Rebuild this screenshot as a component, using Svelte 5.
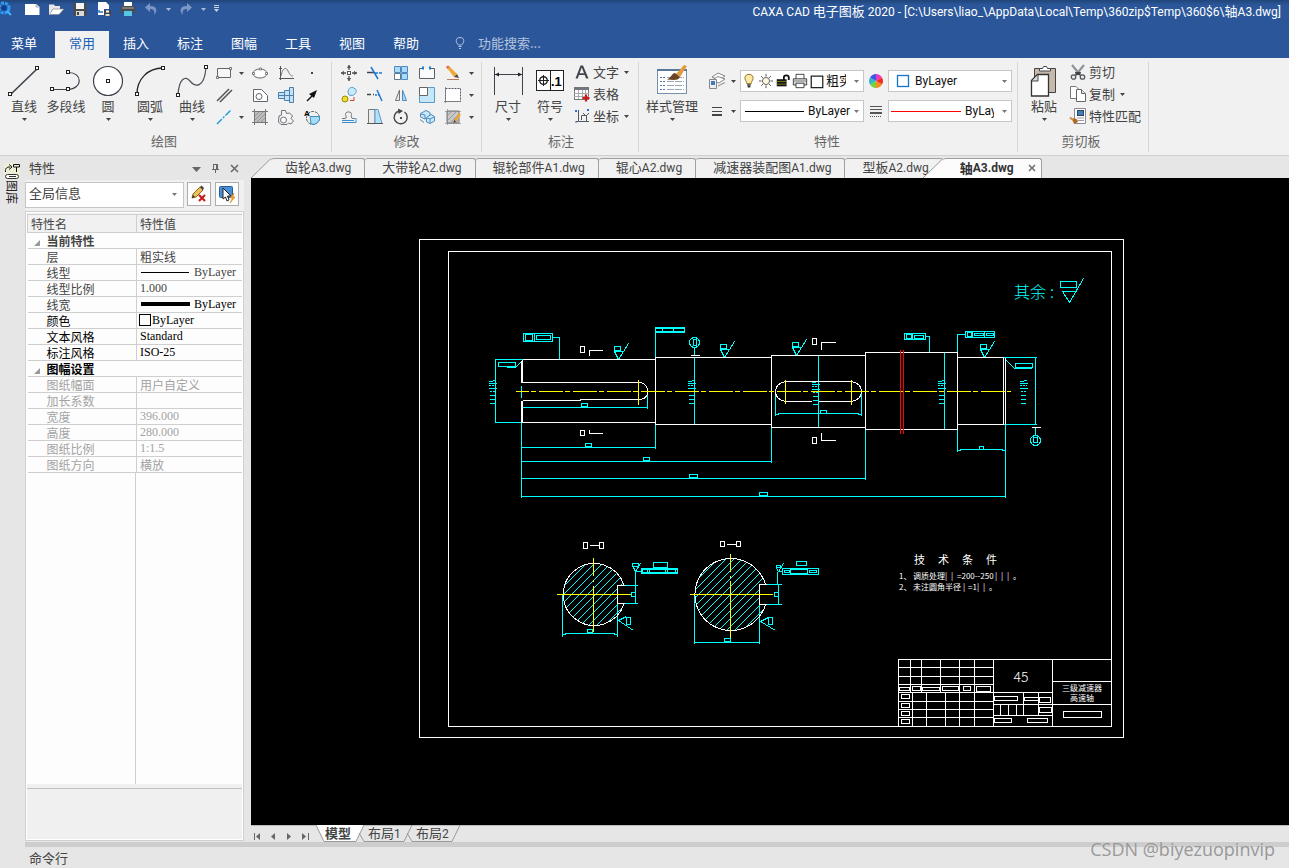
<script>
  const sq = (x, y) => `<rect x="${x}" y="${y}" width="3" height="3" fill="#fff" stroke="#222" stroke-width="1"/>`;

  const big = {
    line: `<path d="M2 30 30 3" stroke="#3c434d" stroke-width="1.6" fill="none"/>${sq(0.5, 27.5)}${sq(27.5, 1.5)}`,
    poly: `<path d="M2 24.500H18M18 7.500C33 7 33 24 18 24.500" stroke="#3c434d" stroke-width="1.2" fill="none"/>${sq(0.5, 22.5)}${sq(16.5, 22.5)}${sq(16.5, 5.5)}`,
    circle: `<circle cx="16" cy="16" r="14.500" fill="#fff" stroke="#3c434d" stroke-width="1.200"/>${sq(14.5, 14.5)}`,
    arc: `<path d="M3 29C3 14 14 3 29 3" stroke="#222" stroke-width="1.3" fill="none"/>${sq(1.5, 27.5)}${sq(27.5, 1.5)}`,
    curve: `<path d="M2 30C3 14 9 10 14 16S28 24 30 3" stroke="#4c525a" stroke-width="1.2" fill="none"/>${sq(0.5, 28.5)}${sq(28.5, 0.5)}`,
    dim: `<path d="M2.500 2V30M30.500 2V30M3 9.500H30" stroke="#3c434d" fill="none"/><path d="M3 9.500 7 7.500V11.500ZM30 9.500 26 7.500V11.500Z" fill="#222"/>`,
    symbol: `<rect x="2.500" y="5.500" width="27" height="20" fill="#fff" stroke="#222"/><path d="M16.500 5V26M4 15.500H15M9.500 10V21" stroke="#222"/><circle cx="9.500" cy="15.500" r="3.800" fill="none" stroke="#222" stroke-width="1.400"/><text x="17" y="21" font-family="Liberation Sans, sans-serif" font-size="13" font-weight="700">.1</text>`,
    style: `<rect x="1.500" y="4.500" width="29" height="24" fill="#fff" stroke="#7890a8"/><rect x="1" y="4" width="30" height="2" fill="#56799c"/><path d="M4 12.500H9M4 16.500H9M4 20.500H9M4 24.500H9" stroke="#4b7bb0" stroke-dasharray="2 1"/><path d="M11 12.500H28M11 16.500H28M11 20.500H28M11 24.500H28" stroke="#9aa7b5" stroke-dasharray="7 1"/><path d="M20 9 28 0 31 1 24 12Z" fill="#e29a3e"/><path d="M19 8 24 12C22 16 17 15 11 14.500 15 13 16 8 19 8Z" fill="#6a4422"/>`,
    paste: `<path d="M6.500 3.500H27.500V27.500H6.500Z" fill="#c6b9ab" stroke="#444"/><path d="M11.500 6V3.500H14.500L15.500 1.500H18.500L19.500 3.500H22.500V6Z" fill="#fff" stroke="#444"/><path d="M3.500 15.500 9.500 9.500H20.500V31H3.500Z" fill="#fff" stroke="#333" stroke-width="1.300"/><path d="M4 16H10V10" fill="#d9d9d9" stroke="#444"/>`
  };

  const small = {
    rect: `<path d="M2.500 4.500H15.500V13.500H2.500Z" fill="#f6f6f6" stroke="#62676e"/><path d="M1.500 12.500h2v2h-2ZM14.500 3.500h2v2h-2Z" fill="#fff" stroke="#555" stroke-width=".8"/>`,
    ellipse: `<ellipse cx="9" cy="9.500" rx="7" ry="4.500" fill="#fff" stroke="#62676e"/><path d="M8.500 4h2v2h-2ZM1.500 8.500h2v2h-2ZM14.500 8.500h2v2h-2Z" fill="#fff" stroke="#555" stroke-width=".7"/>`,
    func: `<path d="M3.500 2V16M2 14.500H17M2 4.500H5" stroke="#52575e" fill="none"/><path d="M4 12C6 3 9 3 11 7S14 12 16 12" stroke="#777" fill="none"/>`,
    point: `<rect x="8" y="8" width="2" height="2" fill="#444"/>`,
    parallel: `<path d="M2 15 14 3M5 16 17 4" stroke="#555" stroke-width="1.500"/>`,
    hole: `<path d="M2.500 3.500H10.500L16.500 9.500V15.500H2.500Z" fill="#fff" stroke="#62676e"/><circle cx="8" cy="10.500" r="3" fill="#fff" stroke="#62676e"/>`,
    shaft: `<path d="M1.500 6.500H7.500V12.500H1.500ZM7.500 4.500H12.500V14.500H7.500ZM12.500 1.500H16.500V16.500H12.500Z" fill="#c5e3f7" stroke="#4d80ae"/><path d="M1 9.500H17" stroke="#4d80ae"/>`,
    arrow: `<path d="M4 15 10 9" stroke="#111" stroke-width="1.500"/><path d="M14 4 6 8 11 12Z" fill="#111"/>`,
    center: `<path d="M2 16 16 2" stroke="#199be0" stroke-width="1.400" stroke-dasharray="7 1.500 2 1.500"/>`,
    hatch: `<path d="M3.500 3.500H14.500V14.500H3.500Z" fill="#bdbdbd" stroke="#666"/><path d="M1 3.500H17M1 14.500H17M3.500 1V17M14.500 1V17" stroke="#777"/><path d="M4 8 8 4M4 12 12 4M6 14 14 6M10 14 14 10" stroke="#888" stroke-width=".8"/>`,
    gear: `<path d="M4.500 2.500H8.500L9.500 5.500 12.500 5 15.500 8 14 10.500 16.500 13 14 16 11.500 15 10 16.500H4L1.500 14 2 8 4.500 7Z" fill="#f4f4f4" stroke="#6c7178"/><circle cx="6.500" cy="12" r="3" fill="#fff" stroke="#6c7178"/>`,
    local: `<circle cx="10" cy="10" r="6.500" fill="none" stroke="#555" stroke-dasharray="3 1"/><path d="M7 8.500H16.500A6.500 6.500 0 0 1 8 16Z" fill="#a8dcf5" stroke="#3a8fc0"/><text x="1" y="8" font-family="Liberation Sans, sans-serif" font-size="8" font-weight="700">A</text>`,
    move: `<path d="M9 1V6M9 12V17M1 9H6M12 9H17" stroke="#555" stroke-width="1.300"/><path d="M9 1 6.800 4H11.200ZM9 17 6.800 14H11.200ZM1 9 4 6.800V11.200ZM17 9 14 6.800V11.200Z" fill="#555"/><rect x="7.500" y="7.500" width="3" height="3" fill="#fff" stroke="#555"/>`,
    trim: `<path d="M1 8.500H8" stroke="#444" stroke-width="1.500"/><path d="M9 9H17" stroke="#1d78d2" stroke-width="1.500" stroke-dasharray="3 1"/><path d="M5 3 12 15" stroke="#1d78d2" stroke-width="1.500"/>`,
    array: `<path d="M2.500 2.500H8.500V8.500H2.500ZM9.500 2.500H15.500V8.500H9.500ZM9.500 9.500H15.500V15.500H9.500Z" fill="#a9ddf7" stroke="#4c8abf"/><path d="M2.500 9.500H8.500V15.500H2.500Z" fill="#fff" stroke="#62778a"/>`,
    breaks: `<path d="M1.500 4.500H4.500M12.500 4.500H16.500V14.500H1.500V4.500" fill="#fbfbfb" stroke="#5a5f66"/><rect x="4" y="2.500" width="2" height="3" fill="#1780d6"/><rect x="11" y="2.500" width="2" height="3" fill="#1780d6"/>`,
    erase: `<path d="M3 4 5 2 13 10 10 13Z" fill="#f0a835"/><path d="M10 13 13 10 15 14Z" fill="#5a4634"/><path d="M3 15.500H15" stroke="#bd7a5a"/><path d="M2 3 4 1.500 5.500 3 3.500 5Z" fill="#df6a4e"/>`,
    copymove: `<circle cx="5" cy="13" r="3" fill="#f2de21" stroke="#9a8c10"/><path d="M8 6C8 3 10 1 13 1.500L16 3.500C17 6 15 9 12 9.500L9 9Z" fill="#c9eafc" stroke="#5f9fd0"/><path d="M10 14.500H14V11" stroke="#c44" fill="none"/>`,
    extend: `<path d="M1 8.500H5M7 8.500H8" stroke="#444" stroke-width="1.500"/><path d="M9 9H14" stroke="#1d78d2" stroke-width="1.500" stroke-dasharray="2 1"/><path d="M11 4 16 15" stroke="#1d78d2" stroke-width="1.500"/>`,
    mirror: `<path d="M7.500 4V14.500H3.500Z" fill="#e8e8e8" stroke="#777"/><path d="M10.500 4V14.500H14.500Z" fill="#a6dcf6" stroke="#4c8abf"/>`,
    scale: `<path d="M1.500 1.500H16.500V16.500H1.500Z" fill="#c4e8fa" stroke="#5c9bc8"/><path d="M1.500 1.500H9.500V9.500H1.500Z" fill="#fff" stroke="#666"/>`,
    stretch: `<path d="M1.500 2.500H16.500V15.500H1.500Z" fill="#fff" stroke="#556" stroke-dasharray="2 1"/><path d="M1.500 1V17M0 15.500H17" stroke="#777" stroke-width=".8"/>`,
    offset: `<path d="M2 10.500H5C7 10.500 6 8 5.500 6.500 5 3 12 3 11.500 6.500 11 8 11 10.500 13 10.500H15" fill="none" stroke="#777"/><path d="M2 14.500H16V10" fill="none" stroke="#3d8ccb"/><path d="M2 12.500H14" stroke="#3d8ccb"/>`,
    taper: `<path d="M2.500 1.500H9V15.500H2.500Z" fill="#ececec" stroke="#777"/><path d="M9 1.500H12L16 15.500H9Z" fill="#b5e1f8" stroke="#5c9bc8"/><path d="M1 15.500H17" stroke="#555"/>`,
    rotate: `<path d="M7 3A6.500 6.500 0 1 0 12.500 4" fill="none" stroke="#444" stroke-width="1.400"/><path d="M6 .5 11 3 6.500 6Z" fill="#444"/><rect x="8" y="9" width="2" height="2" fill="#444"/>`,
    explode: `<path d="M2.500 5.500 8 2.500 12 4.500V9L7 11 2.500 9Z" fill="#c9eafc" stroke="#4c8abf"/><path d="M8.500 9.500 13 6.500 16.500 8.500V13L12 15.500 8.500 14Z" fill="#c9eafc" stroke="#4c8abf"/><path d="M2 11.500 6 14.500" stroke="#4c8abf"/><path d="M9 10 12 11V15M12 11 16 9M3 6 7 7V11" stroke="#4c8abf" fill="none"/>`,
    hatchedit: `<path d="M3 3H15V15H3Z" fill="#c9c9c9" stroke="#777"/><path d="M3 8 8 3M3 13 13 3M6 15 15 6M11 15 15 11" stroke="#999"/><path d="M1 3.500H17M1 15.500H17M3.500 1V17" stroke="#888" stroke-width=".7"/><path d="M10 12 15 5 17 6.500 12 13.500Z" fill="#efa432"/><path d="M10 12 12 13.500 9.500 15Z" fill="#333"/>`,
    text: `<path d="M2.500 15.500 7.500 2.500H10L15.500 15.500H13L11.700 12H6L4.800 15.500ZM6.600 10.200H11L8.800 4.500Z" fill="#41464e"/>`,
    table: `<rect x="1.500" y="2.500" width="14" height="12" fill="#fff" stroke="#777"/><rect x="1" y="2" width="15" height="3" fill="#73777c"/><path d="M1 8.500H16M1 11.500H16M5.500 5V14M9.500 5V14M12.500 5V14" stroke="#aaa"/><path d="M13 9.500V16.500M9.500 13H16.500" stroke="#d01818" stroke-width="2.200"/>`,
    coord: `<path d="M5.500 4V14.500H16M8.500 13V8.500H12M10 6 13 9 16 6M13.500 9V14" fill="none" stroke="#53585f"/><path d="M5.500 3v2M3 14.500h2" stroke="#53585f"/><path d="M2 3 4 5M4 3 2 5M14 2 16 4M16 2 14 4M2 15h2" stroke="#2a6fd0"/>`,
    layers: `<path d="M4 5 10 1 17 4 11 8Z" fill="#fff" stroke="#888"/><path d="M4 8 10 4.500 17 7 11 11Z" fill="#fff" stroke="#888"/><path d="M1.500 7.500H8.500V16.500H1.500Z" fill="#eee" stroke="#888"/><rect x="3" y="9" width="4" height="4" fill="#3d7dbd"/><path d="M10 14 17 10.500" stroke="#888"/>`,
    lines: `<path d="M4 5.500H14" stroke="#444"/><path d="M4 9.500H14" stroke="#444"/><path d="M4 13H14" stroke="#444" stroke-width="2"/>`,
    wheel: `<g transform="translate(9 9)"><path d="M0 0V-7A7 7 0 0 1 6 -3.500Z" fill="#e83ab8"/><path d="M0 0 6 -3.500A7 7 0 0 1 6 3.500Z" fill="#ee2e24"/><path d="M0 0 6 3.500A7 7 0 0 1 0 7Z" fill="#f58a1f"/><path d="M0 0V7A7 7 0 0 1 -6 3.500Z" fill="#7ccf35"/><path d="M0 0 -6 3.500A7 7 0 0 1 -6 -3.500Z" fill="#2fb6c9"/><path d="M0 0 -6 -3.500A7 7 0 0 1 0 -7Z" fill="#4355e8"/></g>`,
    widths: `<path d="M3 4.500H15M3 7.500H15" stroke="#555"/><path d="M3 11H15" stroke="#555" stroke-width="2"/><path d="M3 14.500H15" stroke="#555" stroke-dasharray="1 1"/>`,
    cut: `<path d="M3 2 12 13M15 2 6 13" stroke="#8f9499" stroke-width="2.200"/><circle cx="4.500" cy="14" r="2.200" fill="none" stroke="#55595e" stroke-width="1.300"/><circle cx="13.500" cy="14" r="2.200" fill="none" stroke="#55595e" stroke-width="1.300"/><path d="M6 9H12L11 12H7Z" fill="#444"/>`,
    copy: `<path d="M1.500 1.500H7L9.500 4V13.500H1.500Z" fill="#fff" stroke="#777"/><path d="M7.500 4.500H12.500L16.500 8.500V16.500H7.500Z" fill="#fff" stroke="#666"/><path d="M12.500 4.500V8.500H16.500" fill="#ddd" stroke="#666"/>`,
    match: `<path d="M5.500 1.500H16.500V16.500H5.500Z" fill="#fff" stroke="#889"/><rect x="8.500" y="3.500" width="6" height="5" fill="#3f7fc0" stroke="#345"/><path d="M8 11H15M9 13.500H15" stroke="#99a"/><path d="M3 12C5 10 9 12 9 15L5 17Z" fill="#b3681e"/><path d="M1 10.500 4 13" stroke="#c98f4a" stroke-width="2"/>`,
    bulb: `<path d="M9 1.500C5.500 1.500 4 4 4.500 6.500 5 9 6.500 9.500 6.500 12H11.500C11.500 9.500 13 9 13.500 6.500 14 4 12.500 1.500 9 1.500Z" fill="#fde9a2" stroke="#8a6a1c"/><path d="M7 13.500H11M7.500 15.500H10.500" stroke="#333" stroke-width="1.600"/>`,
    sun: `<circle cx="9" cy="9" r="4" fill="#fff8e0" stroke="#555"/><path d="M9 1V4M9 14V17M1 9H4M14 9H17M3.500 3.500 5.500 5.500M12.500 12.500 14.500 14.500M14.500 3.500 12.500 5.500M3.500 14.500 5.500 12.500" stroke="#444"/>`,
    lock: `<path d="M10 9V5C10 2 15.500 2 15.500 5V8" fill="none" stroke="#111" stroke-width="2"/><path d="M2 7H13V15H2Z" fill="#111"/><path d="M2 9.500H13M2 12.500H13" stroke="#8a8a20"/>`,
    printer: `<path d="M4.500 7V1.500H13.500V7" fill="#fff" stroke="#333"/><path d="M1.500 6.500H16.500V13.500H1.500Z" fill="#d9dde0" stroke="#333"/><path d="M4.500 11.500H13.500V16.500H4.500Z" fill="#fff" stroke="#333"/><path d="M1.500 9H16" stroke="#777"/>`,
    white: `<rect x="2.500" y="3.500" width="13" height="13" fill="#fff" stroke="#111" stroke-width="1.300"/>`,
    blue: `<rect x="3.500" y="3.500" width="11" height="11" fill="#fff" stroke="#1474cc" stroke-width="1.300"/>`
  };

  const qat = [
    ['新建', `<path d="M1 3H12L15.500 6V14H1Z" fill="#fff"/><path d="M12 3V6H15.500" fill="#ddd" stroke="#999" stroke-width=".7"/>`],
    ['打开', `<path d="M1 3.500H6L7 5H12V8H5L2 14H1Z" fill="#e8e8e8"/><path d="M5 8H16L11 13.500H1.500Z" fill="#fff" stroke="#777" stroke-width=".6"/>`],
    ['保存', `<path d="M1.500 2H14.500V15H3L1.500 13.500Z" fill="#4a4a4a"/><rect x="4" y="2" width="8" height="6" fill="#f5f5f5"/><rect x="4" y="10" width="8" height="5" fill="#d9d9d9"/><rect x="5" y="11" width="2" height="3" fill="#444"/>`],
    ['另存为', `<path d="M2 1H10L13 4V8H8V14H2Z" fill="#fff"/><path d="M3 9V11H7" stroke="#2477c9" stroke-width="1.500" fill="none"/><rect x="8" y="9" width="7" height="6" fill="#444"/><rect x="10" y="9.500" width="3" height="2" fill="#fff"/><rect x="9.500" y="13" width="4" height="2" fill="#ddd"/>`],
    ['打印', `<path d="M4 1H12V5H4Z" fill="#fff"/><path d="M1 5H15V12H1Z" fill="#4b4b4b"/><path d="M2 7H14" stroke="#aaa"/><path d="M4 10H12V15H4Z" fill="#55c8e8"/>`]
  ];

  const menus = ['常用', '插入', '标注', '图幅', '工具', '视图', '帮助'];
  const drawBig = [['line', '直线', 1], ['poly', '多段线', 0], ['circle', '圆', 1], ['arc', '圆弧', 1], ['curve', '曲线', 1]];
  const drawSmall = ['rect', 'v', 'ellipse', 'func', 'point', 'parallel', '', 'hole', 'shaft', 'arrow', 'center', 'v', 'hatch', 'gear', 'local'];
  const editSmall = ['move', 'trim', 'array', 'breaks', 'erase', 'v', 'copymove', 'extend', 'mirror', 'scale', 'stretch', 'v', 'offset', 'taper', 'rotate', 'explode', 'hatchedit', 'v'];
  const docs = ['齿轮A3.dwg', '大带轮A2.dwg', '辊轮部件A1.dwg', '辊心A2.dwg', '减速器装配图A1.dwg', '型板A2.dwg'];
  const propsNow = [
    ['层', '粗实线', ''], ['线型', 'ByLayer', 'thin'], ['线型比例', '1.000', ''], ['线宽', 'ByLayer', 'thick'],
    ['颜色', 'ByLayer', 'box'], ['文本风格', 'Standard', ''], ['标注风格', 'ISO-25', '']
  ];
  const propsSheet = [['图纸幅面', '用户自定义'], ['加长系数', ''], ['宽度', '396.000'], ['高度', '280.000'], ['图纸比例', '1:1.5'], ['图纸方向', '横放']];

  const parts = (s) => s.match(/[\x20-\x7e]+|[^\x20-\x7e]+/g) ?? [];
  const latin = (s) => /^[\x20-\x7e]/.test(s);

  const rough = (x, y) => `M${x - 4} ${y - 13}h6v4h-6ZM${x - 4} ${y - 8}h9M${x - 4} ${y - 8}L${x} ${y}L${x + 10} ${y - 16}`;
  const ticks = (x, y) => `M${x} ${y + 1}h4M${x + 4} ${y}h3M${x} ${y + 3}h8M${x} ${y + 5}h2M${x + 3} ${y + 5}h2M${x + 6} ${y + 5}h1M${x} ${y + 8}h8M${x + 1} ${y + 11}h2M${x + 4} ${y + 11}h2M${x + 1} ${y + 15}h5M${x + 1} ${y + 19}h5M${x + 1} ${y + 23}h5`;
  const box = (x1, y1, x2, y2) => `M${x1} ${y1}H${x2}V${y2}H${x1}Z`;
  const hatch = (cx, r) => {
    let d = '';
    for (let c = -2 * r; c <= 2 * r; c += 8) d += `M${cx + c - 40} 634L${cx + c + 40} 554`;
    return d;
  };

  const outline = [
    box(419, 239, 1123, 737), box(448, 251, 1111, 726),
    'M521 360V382M522 359V382M521 400V422M522 400V422M522 359H655V422H522M522 382H640M522 400H580V399H640M640 382Q647 384 647 391T640 399',
    'M655 357H771V424H655ZM771 355H865V427H771ZM865 352H957V429H865ZM957 357H1003V424H957M1003 357V424M1005 357V424',
    'M785 381H851M785 401H811M818 401H851M785 381Q775 383 775 391T785 401M851 381Q861 383 861 391T851 401',
    box(580, 346, 584, 352), 'M589 355V350H602', box(580, 430, 584, 435), 'M589 429V433H602',
    box(812, 338, 816, 344), 'M821 349V342H835', box(812, 437, 816, 443), 'M821 432V440H835',
    'M690 355H699M1031 427H1040',
    box(583, 542, 587, 548), 'M589 545H598', box(599, 542, 603, 548),
    box(720, 541, 724, 546), 'M726 544H735', box(736, 541, 740, 546),
    'M623.500 585A31 31 0 1 0 623.500 603M617 603V585H624M617 603H624M765 584A36 36 0 1 0 765 604M759 604V584H766M759 604H766'
  ].join('');

  const dims = [
    'M494 359H522M494 422H522M495 359V422', box(498, 362, 515, 366), 'M506 367H515L522 360',
    box(523, 333, 552, 341), box(525, 334, 532, 340), 'M534 333V341', box(536, 335, 550, 339), 'M552 337H559V359',
    box(655, 327, 684, 332), 'M655 328H684M655 331H684M662 327V332M673 327V332M655 327V357',
    'M694 347V354M694 357V424M818 355V427M944 352V429', box(693, 339, 696, 345),
    rough(618, 359), rough(724, 357), rough(796, 355), rough(984, 357),
    ticks(488, 380), ticks(687, 380), ticks(811, 381), ticks(937, 380), ticks(1019, 380),
    'M521 385V397M522 407H647M647 392V408', box(581, 403, 587, 406),
    'M775 391V415M861 391V415M775 414H778V413H858V414H861', box(820, 410, 826, 413),
    box(904, 333, 925, 339), box(906, 334, 911, 338), 'M912 333V339', box(914, 335, 923, 338), 'M925 336H929V352',
    box(965, 331, 994, 337), box(967, 332, 971, 336), 'M972 331V337', box(974, 333, 983, 335), 'M984 331V337', box(986, 333, 993, 335), 'M957 352V334H965',
    'M1003 357H1036M1003 424H1036M1035 357V424M1005 359L1014 368H1031', box(1015, 363, 1032, 367),
    'M1035 427V435', box(1033, 437, 1037, 442),
    'M521 422V497M655 424V448M771 427V462M865 429V479M1005 424V497M957 424V451',
    'M521 447H655M521 461H771M521 478H865M521 496H1005M957 450H960V449H1002V450H1005',
    box(585, 443, 591, 446), box(643, 457, 649, 460), box(689, 474, 697, 477), box(759, 492, 767, 495), box(979, 446, 983, 449),
    'M624 585H637M624 603H637M635 571V603', box(631, 592, 635, 596), 'M562 594V636M617 603V636M562 634H565V633H614V634H617', box(587, 629, 592, 632),
    'M635 571H641', box(641, 568, 677, 573), box(642, 569, 647, 572), 'M649 568V573M665 568V573', box(667, 569, 675, 572), 'M641 569H677M641 572H677', box(653, 562, 667, 567),
    box(632, 563, 638, 566), 'M633 567L635 571L640 563', 'M618 620L626 616M618 620L633 630', box(626, 617, 630, 624),
    'M766 584H781M766 604H781M778 584V604M777 571V584', box(774, 592, 778, 596), 'M694 594V643M759 604V643M694 642H759', box(724, 638, 730, 641),
    'M777 571H782', box(782, 568, 818, 574), box(784, 570, 789, 572), 'M790 568V574M807 568V574', box(809, 570, 816, 572), 'M790 569H807M790 573H807', box(796, 561, 806, 565),
    box(776, 565, 780, 567), 'M776 568L778 571L783 563', 'M760 621L768 617M760 621L775 630', box(768, 617, 772, 624),
    box(1060, 281, 1076, 287), 'M1076 291H1062L1069 302L1083 278'
  ].join('');

  const titleBlock = [
    'M898 726V659H1111M993 659V726M1052 659V726',
    'M898 667H993M898 676H993M898 684H993M898 692H993M898 701H993M898 709H993M898 717H993',
    'M910 659V692M921 659V692M940 659V692M959 659V692M974 659V692M912 692V726M926 692V726M945 692V726M959 692V726M974 692V726',
    box(899, 687, 909, 690), box(912, 686, 920, 690), box(922, 687, 939, 690), box(942, 686, 958, 690), box(963, 686, 970, 690), box(976, 686, 990, 691),
    box(901, 694, 909, 698), box(901, 703, 909, 707), box(901, 711, 909, 715), box(901, 719, 909, 723),
    'M993 692H1052M993 704H1052M993 715H1052M1023 692V715M1038 692V715M1000 704V715M1008 704V715M1016 704V715',
    box(994, 696, 1017, 700), box(1024, 697, 1038, 700), box(1039, 697, 1050, 702), box(1039, 707, 1051, 712), box(994, 718, 1011, 722), box(1027, 718, 1047, 722),
    'M1052 681H1111M1052 704H1111', box(1063, 711, 1101, 717)
  ].join('');

  const noteOne = [[899, '1、'], [913, '调质处理'], [945, '|'], [951, '|'], [957, '=200--250'], [995, '|'], [1001, '|'], [1007, '|'], [1013, '。']];
  const noteTwo = [[899, '2、'], [913, '未注圆角半径'], [963, '|'], [968, '=1'], [977, '|'], [983, '|'], [989, '。']];
</script>

{#snippet mixed(s)}{#each parts(s) as p}{#if latin(p)}<span class="lat">{p}</span>{:else}{p}{/if}{/each}{/snippet}
{#snippet caret()}<svg class="caret" viewBox="0 0 5 3" aria-hidden="true"><path d="M0 0H5L2.5 3Z" fill="currentColor" /></svg>{/snippet}
{#snippet ico(name)}<svg class="ico" viewBox="0 0 18 18" aria-hidden="true">{@html small[name]}</svg>{/snippet}
{#snippet bigBtn(icon, text, drop)}
  <button class="big">
    <svg viewBox="0 0 32 32" aria-hidden="true">{@html big[icon]}</svg>
    <span>{text}</span>
    {#if drop}{@render caret()}{/if}
  </button>
{/snippet}
{#snippet rowBtn(icon, text, drop)}
  <button class="row">{@render ico(icon)}<span>{text}</span>{#if drop}{@render caret()}{/if}</button>
{/snippet}

<div class="app">
  <header>
    <div class="titlebar">
      <div class="qat">
        <svg class="logo" viewBox="0 0 12 16" aria-hidden="true"><circle cx="4" cy="7" r="5" fill="none" stroke="#2f9bf5" stroke-width="3" stroke-dasharray="3 1" /><circle cx="4" cy="7" r="2.500" fill="#0e3f8f" /><path d="M7 10 11 14" stroke="#42b4ff" stroke-width="2" /></svg>
        {#each qat as [name, art]}
          <button aria-label={name}><svg viewBox="0 0 16 16">{@html art}</svg></button>
        {/each}
        <button class="dim" aria-label="撤销"><svg viewBox="0 0 16 16"><path d="M7 2 2 6.500 7 11V8C11 8 12 10 11 14 15 10 14 5 7 5Z" fill="currentColor" /></svg></button>
        <button class="tiny" aria-label="撤销列表">{@render caret()}</button>
        <button class="dim" aria-label="重做"><svg viewBox="0 0 16 16"><path d="M9 2 14 6.500 9 11V8C5 8 4 10 5 14 1 10 2 5 9 5Z" fill="currentColor" /></svg></button>
        <button class="tiny" aria-label="重做列表">{@render caret()}</button>
        <button class="tiny" aria-label="自定义"><svg viewBox="0 0 7 8"><path d="M1 .5H6M1 2.500H6" stroke="#c9d3e3" /><path d="M1 4H6L3.500 7Z" fill="#c9d3e3" /></svg></button>
      </div>
      <div class="title">{@render mixed('CAXA CAD 电子图板 2020 - [C:\\Users\\liao_\\AppData\\Local\\Temp\\360zip$Temp\\360$6\\轴A3.dwg]')}</div>
    </div>
    <nav>
      <button class="file">菜单</button>
      {#each menus as m, i}<button class:on={i === 0}>{m}</button>{/each}
      <label class="search">
        <svg viewBox="0 0 10 14" aria-hidden="true"><path d="M5 1.500C0 1.500 .5 6.500 3.500 9H6.500C9.500 6.500 10 1.500 5 1.500ZM3.500 10.500H6.500M4 12.500H6" fill="none" stroke="currentColor" /></svg>
        <input aria-label="功能搜索" placeholder="功能搜索..." />
      </label>
    </nav>
  </header>

  <div class="ribbon">
    <section class="g-draw">
      <div class="tools">
        {#each drawBig as [i, t, d]}{@render bigBtn(i, t, d)}{/each}
        <div class="grid draw">
          {#each drawSmall as n}
            {#if n === 'v'}<button aria-label="更多">{@render caret()}</button>{:else if n}<button aria-label={n}>{@render ico(n)}</button>{:else}<span></span>{/if}
          {/each}
        </div>
      </div>
      <h2>绘图</h2>
    </section>
    <section class="g-edit">
      <div class="tools">
        <div class="grid edit">
          {#each editSmall as n}
            {#if n === 'v'}<button aria-label="更多">{@render caret()}</button>{:else}<button aria-label={n}>{@render ico(n)}</button>{/if}
          {/each}
        </div>
      </div>
      <h2>修改</h2>
    </section>
    <section class="g-note">
      <div class="tools">
        {@render bigBtn('dim', '尺寸', 1)}
        {@render bigBtn('symbol', '符号', 1)}
        <div class="rows">
          {@render rowBtn('text', '文字', 1)}
          {@render rowBtn('table', '表格', 0)}
          {@render rowBtn('coord', '坐标', 1)}
        </div>
      </div>
      <h2>标注</h2>
    </section>
    <section class="g-prop">
      <div class="tools">
        {@render bigBtn('style', '样式管理', 1)}
        <div class="combos">
          <button class="split" aria-label="图层">{@render ico('layers')}{@render caret()}</button>
          <div class="combo layer">
            {#each ['bulb', 'sun', 'lock', 'printer', 'white'] as n}{@render ico(n)}{/each}
            <select aria-label="当前层"><option>粗实线层</option></select>{@render caret()}
          </div>
          <button class="mid" aria-label="颜色">{@render ico('wheel')}</button>
          <div class="combo color">{@render ico('blue')}<select aria-label="当前颜色"><option>ByLayer</option></select>{@render caret()}</div>
          <button class="split" aria-label="线型">{@render ico('lines')}{@render caret()}</button>
          <div class="combo"><i class="stroke"></i><select aria-label="当前线型"><option>ByLayer</option></select>{@render caret()}</div>
          <button class="mid" aria-label="线宽">{@render ico('widths')}</button>
          <div class="combo"><i class="stroke red"></i><select class="lwidth" aria-label="当前线宽"><option>ByLayer</option></select>{@render caret()}</div>
        </div>
      </div>
      <h2>特性</h2>
    </section>
    <section class="g-clip">
      <div class="tools">
        {@render bigBtn('paste', '粘贴', 1)}
        <div class="rows">
          {@render rowBtn('cut', '剪切', 0)}
          {@render rowBtn('copy', '复制', 1)}
          {@render rowBtn('match', '特性匹配', 0)}
        </div>
      </div>
      <h2>剪切板</h2>
    </section>
  </div>

  <main>
    <aside class="rail">
      <button>
        <svg viewBox="0 0 16 17" aria-hidden="true"><rect width="16" height="16" fill="#efefd8" /><path d="M1.500 9C1 5 3 4 6 4M5 1.500 8 4 5 6.500M9.500 1.500H15.500V4H9.500ZM12.500 4V9" stroke="#111" fill="none" /><rect x="1.500" y="11.500" width="13" height="4" rx="2" fill="#fff" stroke="#333" /><path d="M5 13.500H12" stroke="#333" /></svg>
        <span>图库</span>
      </button>
    </aside>

    <aside class="panel">
      <div class="phead">
        <h1>特性</h1>
        <button aria-label="选项"><svg viewBox="0 0 11 11"><path d="M1 4H10L5.500 9Z" fill="#666" /></svg></button>
        <button aria-label="固定"><svg viewBox="0 0 11 11"><path d="M3.500 1V6.500M7.500 1V6.500M6.500 1V6.500M3 1.500H8M2 6.500H9M5.500 7V10" stroke="#666" fill="none" /></svg></button>
        <button aria-label="关闭"><svg viewBox="0 0 11 11"><path d="M2 2 9 9M9 2 2 9" stroke="#666" stroke-width="1.500" /></svg></button>
      </div>
      <div class="pick">
        <div class="combo scope"><select aria-label="对象"><option>全局信息</option></select>{@render caret()}</div>
        <button aria-label="取消选择"><svg viewBox="0 0 20 20"><path d="M3 14 4 10 11 3 14 6 7 13Z" fill="#ecc15a" stroke="#8a6420" /><path d="M3 14 4 11 6 13Z" fill="#333" /><path d="M11 3 12.500 1.500 15 4 14 6Z" fill="#444" /><path d="M10 11 16 17M16 11 10 17" stroke="#c81616" stroke-width="2" /></svg></button>
        <button aria-label="快速选择"><svg viewBox="0 0 20 20"><rect x="2.500" y="2.500" width="13" height="11" rx="1" fill="#4a90d6" stroke="#2a5e98" /><path d="M6 4V15L8.500 13 10 17 12 16 10.500 12H14Z" fill="#fff" stroke="#222" /><path d="M17 9 13 14H15.500L13 19 18 13H16Z" fill="#f7a421" stroke="#c87810" stroke-width=".5" /></svg></button>
      </div>
      <div class="sheet">
        <table>
          <thead><tr><th>特性名</th><th>特性值</th></tr></thead>
          <tbody>
            <tr class="cat"><td colspan="2"><svg viewBox="0 0 6 6" aria-hidden="true"><path d="M6 0V6H0Z" fill="#999" /></svg>当前特性</td></tr>
            {#each propsNow as [k, v, mark], i}
              <tr class:dark={i > 3}>
                <td>{k}</td>
                <td class:dark={i > 2}><div class="val">{#if mark}<i class={mark}></i>{/if}<span class:ser={latin(v)}>{v}</span></div></td>
              </tr>
            {/each}
            <tr class="cat dark"><td colspan="2"><svg viewBox="0 0 6 6" aria-hidden="true"><path d="M6 0V6H0Z" fill="#999" /></svg>图幅设置</td></tr>
            {#each propsSheet as [k, v]}
              <tr class="off"><td>{k}</td><td><div class="val"><span class:ser={latin(v)}>{v}</span></div></td></tr>
            {/each}
          </tbody>
        </table>
        <div class="fill"></div>
        <div class="hint"></div>
      </div>
    </aside>

    <section class="work">
      <div class="docs">
        {#each docs as d, i}
          <button class:first={i === 0}>
            {#if i === 0}<svg class="slant" viewBox="0 0 20 20" aria-hidden="true"><path d="M0 20 20 0V20Z" fill="#f1f1f1" /><path d="M0 20 20 .5" stroke="#999" /></svg>{/if}
            {@render mixed(d)}
          </button>
        {/each}
        <button class="active">
          <svg class="slant" viewBox="0 0 20 20" aria-hidden="true"><path d="M0 20 20 0V20Z" fill="#fcfcfc" /><path d="M0 20 20 .5" stroke="#999" /></svg>
          {@render mixed('轴A3.dwg')}
          <svg class="x" viewBox="0 0 8 8" aria-hidden="true"><path d="M1 1 7 7M7 1 1 7" stroke="#666" stroke-width="1.400" /></svg>
        </button>
      </div>

      <div class="canvas">
        <svg viewBox="251 178 1038 647" preserveAspectRatio="xMinYMin meet" role="img" aria-label="轴A3">
          <defs>
            <clipPath id="c1"><path d="M623 585A31 31 0 1 0 623 603H617V585Z" /></clipPath>
            <clipPath id="c2"><path d="M765 584A36 36 0 1 0 765 604H759V584Z" /></clipPath>
          </defs>
          <g class="ink" transform="translate(.5 .5)">
            <path d={hatch(593, 31)} stroke="#0ff" clip-path="url(#c1)" />
            <path d={hatch(730, 36)} stroke="#0ff" clip-path="url(#c2)" />
            <path d={dims} stroke="#0ff" />
            <circle cx="694" cy="342" r="5" stroke="#0ff" />
            <circle cx="1035" cy="440" r="5" stroke="#0ff" />
            <path d={outline} stroke="#fff" />
            <path d={titleBlock} stroke="#fff" />
            <path d="M515 391H1010" stroke="#ff0" stroke-dasharray="24 2 5 3" stroke-dashoffset="11" />
            <path d="M638 379V404M785 379V403M851 379V404M556 594H593M593 594H630M689 594H772M593 557V575M593 579V581M593 585V631M730 553V571M730 575V577M730 580V637" stroke="#ff0" />
            <path d="M900 349V433M903 349V433" stroke="#f00" />
          </g>
          <g class="lettering">
            <text x="1014 1030 1050" y="298" class="cyan" font-size="16">其余:</text>
            <text x="914 938 962 986" y="564" font-size="11">技术条件</text>
            <text y="579" font-size="8">{#each noteOne as [x, t]}<tspan {x}>{t}</tspan>{/each}</text>
            <text y="590" font-size="8">{#each noteTwo as [x, t]}<tspan {x}>{t}</tspan>{/each}</text>
            <text x="1021" y="682" font-size="14" class="thinner" text-anchor="middle">45</text>
            <text x="1082" y="691" font-size="8" text-anchor="middle">三级减速器</text>
            <text x="1082" y="701" font-size="8" text-anchor="middle">高速轴</text>
          </g>
        </svg>
      </div>

      <div class="layouts">
        <button class="nav" aria-label="第一个"><svg viewBox="0 0 8 8"><path d="M1.500 1V8" stroke="#666" /><path d="M7 1V8L3 4.500Z" fill="#666" /></svg></button>
        <button class="nav" aria-label="上一个"><svg viewBox="0 0 8 8"><path d="M6 1V8L2 4.500Z" fill="#666" /></svg></button>
        <button class="nav" aria-label="下一个"><svg viewBox="0 0 8 8"><path d="M2 1V8L6 4.500Z" fill="#666" /></svg></button>
        <button class="nav" aria-label="最后一个"><svg viewBox="0 0 8 8"><path d="M1 1V8L5 4.500Z" fill="#666" /><path d="M7.500 1V8" stroke="#666" /></svg></button>
        <button class="lay cur"><svg viewBox="0 0 48 17" aria-hidden="true"><path d="M0 0 8 16.500H40L48 0" fill="#fff" stroke="#999" /></svg><span>模型</span></button>
        <button class="lay"><svg viewBox="0 0 48 17" aria-hidden="true"><path d="M-5 8 0 16.500H40L48 0" fill="none" stroke="#999" /></svg><span>布局<span class="lat">1</span></span></button>
        <button class="lay"><svg viewBox="0 0 48 17" aria-hidden="true"><path d="M-5 8 0 16.500H40L48 0" fill="none" stroke="#999" /></svg><span>布局<span class="lat">2</span></span></button>
      </div>
    </section>
  </main>

  <footer>
    <span>命令行</span>
    <span class="mark">CSDN @biyezuopinvip</span>
  </footer>
</div>

<style>
  :global(body) { margin: 0; }
  .app {
    min-height: 100vh; display: flex; flex-direction: column; overflow: hidden;
    background: #e6e6e6; color: #444;
    font: 13px/16px "Noto Sans CJK SC", sans-serif;
  }
  .app * { box-sizing: border-box; }
  button, input, select { font: inherit; color: inherit; border: 0; padding: 0; margin: 0; background: none; }
  h1, h2 { font: inherit; margin: 0; }
  svg { display: block; flex: none; }
  .lat { font-family: Roboto, sans-serif; font-size: 12px; }
  .caret { width: 5px; height: 3px; color: #444; }
  .ico { width: 18px; height: 18px; }

  header { background: linear-gradient(#204579, #2b579a 5px); color: #fff; }
  .titlebar { display: flex; justify-content: space-between; height: 31px; padding-right: 8px; }
  .qat { display: flex; align-items: center; height: 18px; }
  .qat .logo { width: 12px; height: 16px; margin-right: 8px; }
  .qat button { width: 24px; display: flex; justify-content: center; }
  .qat button svg { width: 16px; height: 16px; }
  .qat .dim { color: #7d98c4; width: 22px; }
  .qat .tiny { width: 13px; }
  .qat .tiny svg { width: 7px; height: 8px; }
  .qat .tiny .caret { width: 5px; height: 3px; color: #a9bbd8; }
  .title { padding-top: 3px; white-space: nowrap; }
  nav { display: flex; height: 27px; }
  nav button { width: 54px; padding-bottom: 4px; }
  nav .file { width: 48px; margin-right: 7px; }
  nav .on { background: #f1f1f1; color: #2062b8; }
  .search { display: flex; align-items: center; gap: 13px; margin-left: 22px; padding-bottom: 3px; color: #b5c5de; }
  .search svg { width: 10px; height: 14px; }
  .search input { width: 90px; outline: 0; }
  .search input::placeholder { color: #b5c5de; opacity: 1; }

  .ribbon { display: flex; height: 98px; padding: 4px 0 3px; background: #f1f1f1; border-bottom: 1px solid #d0d0d0; }
  .ribbon section { display: flex; flex-direction: column; border-right: 1px solid #d6d6d6; }
  .ribbon h2 { display: flex; align-items: center; justify-content: center; height: 20px; color: #666; }
  .tools { display: flex; height: 69px; }
  .g-draw { padding: 0 6px 0 3px; }
  .g-edit { padding: 0 4px; }
  .g-note { padding: 0 3px 0 5px; }
  .g-prop { padding: 0 5px 0 3px; }
  .g-clip { padding: 0 7px 0 3px; }
  .big { width: 42px; display: flex; flex-direction: column; align-items: center; padding-top: 3px; white-space: nowrap; }
  .big svg { width: 32px; height: 32px; }
  .big span { margin: 1px 0 4px; }
  .big .caret { width: 5px; height: 3px; }
  .g-prop .big { width: 60px; }
  .g-clip .big { width: 46px; }
  .grid { display: grid; grid-auto-rows: 22px; }
  .grid button { display: flex; align-items: center; justify-content: center; }
  .draw { grid-template-columns: 22px 12px 26px 26px 26px; }
  .edit { grid-template-columns: repeat(5, 26px) 11px; }
  .rows { display: grid; grid-auto-rows: 22px; padding-left: 2px; min-width: 64px; }
  .row { display: flex; align-items: center; gap: 2px; padding-bottom: 2px; white-space: nowrap; }
  .row .caret { margin-left: 3px; }
  .combos { display: grid; grid-template-columns: 32px 124px 24px 124px; grid-auto-rows: 22px; gap: 8px 0; padding: 8px 0 0 6px; }
  .split { display: flex; align-items: center; justify-content: space-between; padding-right: 4px; }
  .mid { display: flex; align-items: center; justify-content: center; }
  .combo { display: flex; align-items: center; background: #fff; border: 1px solid #c6c6c6; padding: 0 4px 0 1px; color: #111; min-width: 0; overflow: hidden; font-family: Roboto, "Noto Sans CJK SC", sans-serif; font-size: 12px; }
  .combo select { flex: 1; min-width: 0; appearance: none; outline: 0; white-space: nowrap; overflow: hidden; text-overflow: clip; }
  .combo .caret { color: #777; }
  .layer { padding-left: 0; font-size: 13px; }
  .layer .ico { width: 16px; height: 18px; margin-right: 1px; }
  .layer select { margin-right: 8px; }
  .color .ico { margin: 0 3px 0 4px; }
  .stroke { height: 1px; background: #000; width: 59px; margin: 0 4px 0 3px; }
  .stroke.red { background: #f00; width: 70px; margin: 0 4px 0 1px; }
  .lwidth { margin-right: 8px; }

  main { flex: 1; display: flex; min-height: 0; }
  .rail { width: 25px; padding: 7px 0 0 4px; }
  .rail button { width: 16px; display: flex; flex-direction: column; align-items: center; color: #222; }
  .rail svg { width: 16px; height: 17px; }
  .rail span { writing-mode: vertical-rl; text-orientation: sideways; font-size: 12px; line-height: 16px; }
  .panel { width: 219px; display: flex; flex-direction: column; }
  .phead { display: flex; align-items: center; height: 24px; padding: 0 0 0 4px; }
  .phead h1 { flex: 1; }
  .phead button { width: 19px; display: flex; justify-content: center; }
  .phead svg { width: 11px; height: 11px; }
  .pick { display: flex; gap: 4px; background: #f0f0f0; padding: 2px 5px 3px 0; }
  .pick .scope { flex: 1; height: 26px; padding: 0 6px 2px 3px; font-size: 13px; color: #444; margin-right: -1px; }
  .pick button { width: 24px; height: 24px; border: 1px solid #adadad; background: #fdfdfd; display: flex; align-items: center; justify-content: center; }
  .pick button svg { width: 20px; height: 20px; }
  .sheet { flex: 1; display: flex; flex-direction: column; border: 1px solid #d0d0d0; outline: 1px solid #fff; outline-offset: -2px; padding: 2px 1px 1px; background: #f0f0f0; margin-bottom: 1px; }
  table { border-collapse: collapse; width: 100%; table-layout: fixed; font: 12px/15px "Noto Sans CJK SC", sans-serif; background: #fdfdfd; }
  th, td { padding: 0 0 1px; text-align: left; font-weight: 400; height: 16px; border-bottom: 1px solid #cfcfcf; white-space: nowrap; overflow: hidden; line-height: 13px; }
  th { height: 18px; background: #f1f1f1; border: 1px solid #cfcfcf; padding-left: 3px; width: 109px; }
  th + th { border-right: 0; width: auto; }
  td:first-child { padding-left: 19px; }
  td + td { border-left: 1px solid #cfcfcf; padding-left: 3px; }
  .val { display: flex; align-items: center; height: 14px; }
  .ser { font: 12px/13px "Liberation Serif", serif; }
  .thin { width: 48px; height: 1px; background: #000; margin: 0 5px 0 1px; }
  .thick { width: 49px; height: 4px; background: #000; margin: 0 4px 0 1px; }
  .box { width: 12px; height: 12px; border: 1px solid #000; margin: 0 1px 0 -1px; }
  .dark { color: #000; }
  .off { color: #a3a3a3; }
  tr.cat td { padding-left: 6px; font-weight: 700; }
  tr.cat svg { display: inline-block; width: 6px; height: 6px; margin-right: 7px; }
  .fill { flex: 1; background: linear-gradient(90deg, transparent 108px, #cfcfcf 108px, #cfcfcf 109px, transparent 109px) #fdfdfd; }
  .hint { height: 55px; }
  .hint::before { content: ""; display: block; margin-top: 4px; border-top: 1px solid #c0c0c0; }

  .work { flex: 1; min-width: 0; display: flex; flex-direction: column; margin-left: 7px; }
  .docs { display: flex; height: 22px; padding-top: 2px; }
  .docs button { position: relative; padding: 0 13px 2px 17px; white-space: nowrap; background: #f1f1f1; border: 1px solid #a0a0a0; border-width: 1px 1px 0 0; border-radius: 3px 3px 0 0; }
  .docs .first { margin-left: 20px; padding-left: 14px; }
  .slant { position: absolute; left: -20px; top: -1px; width: 20px; height: 20px; }
  .docs .active { background: #fcfcfc; font-weight: 700; color: #333; display: flex; align-items: center; padding: 0 5px 1px 17px; }
  .x { width: 8px; height: 8px; margin-left: 14px; }
  .canvas { flex: 1; background: #000; min-height: 0; }
  .canvas svg { width: 100%; height: 100%; }
  .ink { fill: none; stroke-width: 1; shape-rendering: crispEdges; }
  .lettering { fill: #fff; font-family: "Noto Sans CJK SC", sans-serif; }
  .thinner, .cyan { font-weight: 300; }
  .cyan { fill: #0ff; }
  .layouts { display: flex; height: 17px; border-top: 1px solid #bbb; }
  .nav { width: 16px; padding: 4px 0 0 2px; }
  .nav svg { width: 8px; height: 8px; }
  .lay { position: relative; width: 48px; padding-bottom: 2px; text-align: left; line-height: 14px; }
  .lay svg { position: absolute; left: 0; top: -1px; width: 48px; height: 17px; overflow: visible; }
  .lay span { position: relative; }
  .lay > span { padding-left: 4px; }
  .cur { margin-left: 1px; font-weight: 700; }
  .cur > span { padding-left: 9px; }

  footer { position: relative; margin-left: 25px; height: 26px; border-top: 5px solid #cdcdcd; padding: 3px 4px; line-height: 16px; }
  .mark { position: absolute; right: 14px; bottom: 8px; font: 18px/22px "Open Sans", sans-serif; color: #999; }
</style>
